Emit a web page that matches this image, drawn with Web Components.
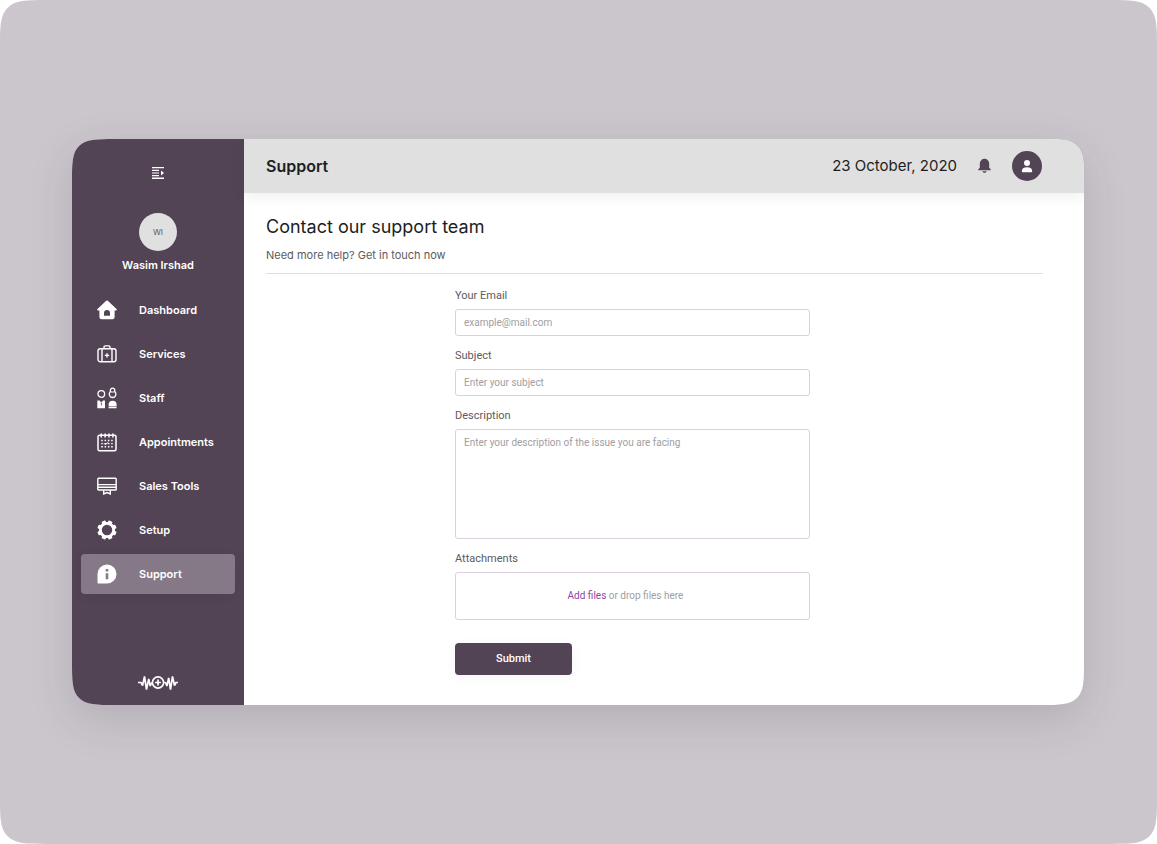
<!DOCTYPE html>
<html lang="en">
<head>
<meta charset="utf-8">
<meta name="viewport" content="width=device-width, initial-scale=1">
<title>Support</title>
<style>
  :root {
    --plum: #524455;
    --plum-light: #857987;
    --silver: #e0e0e0;
    --line: #dccfde;
    --ink: #1e1e20;
    --ink-soft: #5c5a5e;
    --hint: #a09ea1;
    --ui-font: Inter, "Open Sans", sans-serif;
    --form-font: Roboto, "Open Sans", sans-serif;
  }
  body { margin: 0; background: #fff; font-family: var(--ui-font); color: var(--ink); }
</style>
</head>
<body>
<app-shell>
  <side-bar slot="side" user="Wasim Irshad" initials="WI">
    <nav-item icon="home" href="#dashboard">Dashboard</nav-item>
    <nav-item icon="kit" href="#services">Services</nav-item>
    <nav-item icon="staff" href="#staff">Staff</nav-item>
    <nav-item icon="calendar" href="#appointments">Appointments</nav-item>
    <nav-item icon="sales" href="#sales-tools">Sales Tools</nav-item>
    <nav-item icon="gear" href="#setup">Setup</nav-item>
    <nav-item icon="info" href="#support" active>Support</nav-item>
  </side-bar>
  <top-bar slot="top" date="23 October, 2020">Support</top-bar>
  <support-page></support-page>
</app-shell>

<script>
const ICONS = {
  menu: ['0 0 12 12', `<g fill="#fff"><path d="M0 0h12v1.3H0zM0 2.7h7v1.2H0zM0 5.4h7v1.2H0zM0 8h7v1.2H0zM0 10.6h12V12H0zM9 3.6l3 2.4-3 2.4z"/></g>`],
  home: ['0 0 20 20', `<path fill="#fff" fill-rule="evenodd" d="M9.2.8a1.2 1.2 0 0 1 1.6 0l8.7 8.3c.6.6.3 1.3-.5 1.3h-1.4V17a2.2 2.2 0 0 1-2.2 2.2H4.6A2.2 2.2 0 0 1 2.400 17v-6.600H1c-.8 0-1.100-.7-.5-1.300zM7 15.800h6v-2.900a3 3 0 0 0-6 0z"/>`],
  kit: ['0 0 20 20', `<g fill="none" stroke="#fff" stroke-width="1.400"><rect x="1" y="4.700" width="18" height="13" rx="2.200"/><path d="M7 4.500V3.100q0-1.200 1.200-1.200h3.600q1.200 0 1.200 1.200v1.400M5 4.700v13M15 4.700v13M10 9.200v4.400M7.800 11.400h4.400"/></g>`],
  staff: ['0 0 20 22', `<g fill="none" stroke="#fff" stroke-width="1.300"><circle cx="4.300" cy="7" r="3.300"/><path d="M13.600 4.200a2.200 2.200 0 1 1 4 0c2.300 2 1.300 6.300-2 6.300s-4.300-4.300-2-6.300z"/><path d="M13.600 5h4" stroke-width="1"/></g><path fill="#fff" fill-rule="evenodd" d="M.3 13.500h2.200l1.800 2 1.800-2h1.900v7.800H.3zM3.200 15.500l.7 1v2h.8v-2l.7-1-.7 .5h-.8zM11.600 19v-1.500q0-3.800 4-3.800t4 3.800V19zM11.600 19.600h8v1.700h-8z"/>`],
  calendar: ['0 0 20 20', `<rect x="1" y="3.200" width="18" height="15.600" rx="1.500" fill="none" stroke="#fff" stroke-width="1.500"/><path d="M4.200 2v3M8.100 2v3M12 2v3M15.900 2v3" stroke="#fff" stroke-width="1.500" stroke-linecap="round"/><path d="M4.300 8.500h12M4.300 11.600h12M4.300 14.700h12" stroke="#fff" stroke-width="1.400" stroke-dasharray="1.500 1.800"/><path d="M7 11.300l1.300 1.300 3-2.300" fill="none" stroke="#fff"/>`],
  sales: ['0 0 20 20', `<g fill="none" stroke="#fff" stroke-width="1.400"><rect x=".8" y="2.300" width="18.400" height="11.700" rx=".8"/><path d="M1 8.600h18M1 11.300h18M6.700 14v4l3.300-1.500 3.300 1.500v-4"/></g>`],
  info: ['0 0 20 20', `<path fill="#fff" fill-rule="evenodd" d="M10 .5A9.500 9.500 0 0 1 10 19.500H1.400a.9.9 0 0 1-.9-.9V10A9.500 9.500 0 0 1 10 .5zM8.700 5v2.500h2.600V5zM8.700 9.200v6h2.600v-6z"/>`],
  gear: ['0 0 20 20', `<circle cx="10" cy="10" r="6.600" fill="none" stroke="#fff" stroke-width="2.800"/><g fill="#fff">${[22.5, 67.5, 112.5, 157.5, 202.5, 247.5, 292.5, 337.5].map(a => `<path d="M7.600 3.500L8 .9q.1-.5.6-.5h2.800q.5 0 .6.5l.4 2.600z" transform="rotate(${a} 10 10)"/>`).join('')}</g>`],
  bell: ['0 0 13 16', `<path fill="#524455" d="M6.500.8a4.700 4.700 0 0 1 4.700 4.700v4.300l1.500 1.500v.9H.3v-.9l1.500-1.500V5.500A4.700 4.700 0 0 1 6.500.8zM4.300 13.200h4.400q-.5 1.500-2.200 1.500t-2.200-1.500z"/>`],
  user: ['0 0 30 30', `<circle cx="15" cy="15" r="15" fill="#524455"/><circle cx="15" cy="12" r="3" fill="#fff"/><path fill="#fff" d="M9.800 20.300q0-4 5.200-4t5.200 4q0 .9-.9.900h-8.600q-.9 0-.9-.9z"/>`],
  pulse: ['0 0 40 16', `<g fill="none" stroke="#fff" stroke-width="1.700" stroke-linejoin="bevel"><path d="M0 7.500h3l1.600 3L6.500 1.500l2 13L10.700 4l1.500 7 1.600-3.500M26.200 7.500h1.400l1.300 3.500L30.700 3l1.800 11.500L34.500 1.500l2 9 1.500-3h2"/><circle cx="20" cy="7.500" r="5.600"/><path d="M20 4.600v5.800M17.100 7.500h5.800"/></g>`]
};
const icon = (name, w, h = w) =>
  `<svg viewBox="${ICONS[name][0]}" width="${w}" height="${h}" aria-hidden="true">${ICONS[name][1]}</svg>`;

class Base extends HTMLElement {
  connectedCallback() {
    if (this.shadowRoot) return;
    this.attachShadow({ mode: 'open' }).innerHTML =
      `<style>*{box-sizing:border-box}svg{display:block;flex:none}</style>` + this.view();
  }
}

customElements.define('app-shell', class extends Base {
  view() { return `
    <style>
      :host { display: grid; min-height: 100vh; padding: 139px 73px 139px 72px; box-sizing: border-box;
        background: #cbc6cc; border-radius: 48px; corner-shape: squircle; }
      .card { display: grid; grid-template-columns: 172px 1fr; background: #fff; overflow: hidden;
        border-radius: 44px; corner-shape: squircle; box-shadow: 0 14px 44px rgba(50, 40, 52, .15); }
      .body { display: flex; flex-direction: column; min-width: 0; }
    </style>
    <div class="card">
      <slot name="side"></slot>
      <div class="body"><slot name="top"></slot><slot></slot></div>
    </div>`; }
});

customElements.define('side-bar', class extends Base {
  view() { return `
    <style>
      :host { display: flex; flex-direction: column; align-items: center; padding: 28px 9px 14px;
        box-sizing: border-box; background: var(--plum); color: #fff; }
      button { border: 0; padding: 0; background: none; cursor: pointer; }
      .avatar { display: grid; place-items: center; width: 38px; height: 38px; margin-top: 34px;
        border-radius: 50%; background: var(--silver); color: var(--ink-soft); font-size: 8px; }
      .name { margin-top: 6px; font-size: 11px; line-height: 16px; font-weight: 600; }
      nav { display: flex; flex-direction: column; gap: 4px; align-self: stretch; margin: 17px 0 auto; }
    </style>
    <button type="button" aria-label="Collapse menu">${icon('menu', 12)}</button>
    <div class="avatar">${this.getAttribute('initials')}</div>
    <div class="name">${this.getAttribute('user')}</div>
    <nav aria-label="Main"><slot></slot></nav>
    ${icon('pulse', 40, 16)}`; }
});

customElements.define('nav-item', class extends Base {
  view() { return `
    <style>
      :host { display: block; }
      a { display: flex; align-items: center; gap: 22px; height: 40px; padding: 0 16px; border-radius: 4px;
        color: #fff; font-size: 11px; line-height: 16px; font-weight: 600; text-decoration: none; white-space: nowrap; }
      :host([active]) a { background: var(--plum-light); box-shadow: 0 2px 12px rgba(0, 0, 0, .06); }
    </style>
    <a href="${this.getAttribute('href')}">${icon(this.getAttribute('icon'), 20, this.getAttribute('icon') === 'staff' ? 22 : 20)}<slot></slot></a>`; }
});

customElements.define('top-bar', class extends Base {
  view() { return `
    <style>
      :host { display: block; background: var(--silver); box-shadow: 0 3px 14px rgba(0, 0, 0, .07); }
      header { display: flex; align-items: center; height: 54px; padding: 0 42px 0 22px; }
      h1 { flex: 1; margin: 0; font-size: 16px; line-height: 24px; font-weight: 600; }
      time { font-size: 15px; line-height: 24px; }
      button { border: 0; padding: 0; margin-left: 21px; background: none; cursor: pointer; }
    </style>
    <header>
      <h1><slot></slot></h1>
      <time datetime="2020-10-23">${this.getAttribute('date')}</time>
      <button type="button" aria-label="Notifications">${icon('bell', 13, 16)}</button>
      <button type="button" aria-label="Account">${icon('user', 30)}</button>
    </header>`; }
});

customElements.define('form-field', class extends Base {
  view() {
    const hint = this.getAttribute('hint');
    const control = {
      email: `<input id="c" type="email" placeholder="${hint}">`,
      text: `<input id="c" type="text" placeholder="${hint}">`,
      area: `<textarea id="c" placeholder="${hint}"></textarea>`,
      files: `<div class="drop"><input id="c" type="file" multiple><p><label for="c">Add files</label> or drop files here</p></div>`
    }[this.getAttribute('kind')];
    return `
    <style>
      :host { display: flex; flex-direction: column; gap: 5px; font-family: var(--form-font); }
      .caption { font-size: 11px; line-height: 16px; color: var(--ink-soft); }
      input, textarea, .drop { display: block; width: 100%; margin: 0; border: 1px solid var(--line); border-radius: 3px;
        background: #fff; padding: 0 8px; font: 10px/16px var(--form-font); color: var(--ink); outline-color: var(--plum); }
      input { height: 27px; }
      textarea { height: 110px; padding: 5px 8px; resize: none; }
      ::placeholder { color: var(--hint); opacity: 1; }
      .drop { display: grid; place-items: center; height: 48px; padding: 0 22px 0 8px; color: var(--hint); }
      .drop input { position: absolute; width: 1px; height: 1px; padding: 0; border: 0; opacity: 0; }
      .drop label { color: #8c47a0; cursor: pointer; }
      p { margin: 0; }
    </style>
    <label class="caption" for="c">${this.getAttribute('label')}</label>${control}`;
  }
});

customElements.define('support-page', class extends Base {
  view() { return `
    <style>
      :host { display: block; padding: 22px 41px 30px 22px; }
      .intro { display: grid; gap: 8px; padding-bottom: 10px; border-bottom: 1px solid var(--silver); }
      h2 { margin: 0; font-size: 18px; line-height: 24px; font-weight: 400; }
      p { margin: 0; font-size: 11px; line-height: 16px; color: var(--ink-soft); }
      .columns { display: grid; grid-template-columns: 189fr 355fr 233fr; padding-top: 14px; }
      form { grid-column: 2; display: flex; flex-direction: column; gap: 12px; }
      button { width: 117px; height: 32px; margin-top: 11px; border: 0; border-radius: 4px; background: var(--plum); color: #fff;
        font: 500 11px/16px var(--form-font); box-shadow: 0 2px 12px rgba(0, 0, 0, .05); cursor: pointer; }
    </style>
    <main>
      <div class="intro"><h2>Contact our support team</h2><p>Need more help? Get in touch now</p></div>
      <div class="columns">
        <form>
          <form-field kind="email" label="Your Email" hint="example@mail.com"></form-field>
          <form-field kind="text" label="Subject" hint="Enter your subject"></form-field>
          <form-field kind="area" label="Description" hint="Enter your description of the issue you are facing"></form-field>
          <form-field kind="files" label="Attachments"></form-field>
          <button type="submit">Submit</button>
        </form>
      </div>
    </main>`; }
});
</script>
</body>
</html>
